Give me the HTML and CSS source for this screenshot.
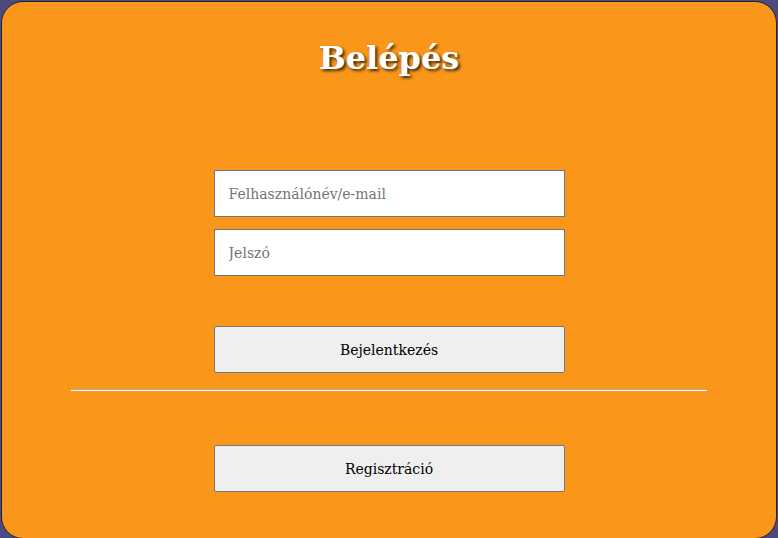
FILE: index.html
```html
<!DOCTYPE html>
<html lang="hu">
<head>
<meta charset="utf-8">
<title>Belépés</title>
<link rel="stylesheet" href="styles.css">
</head>
<body>
<div class="card">
  <h1 class="title">Belépés</h1>
  <form class="form">
    <input class="field" type="text" placeholder="Felhasználónév/e-mail">
    <input class="field" type="password" placeholder="Jelszó">
    <button class="btn btn-login" type="button">Bejelentkezés</button>
  </form>
  <div class="divider"></div>
  <div class="form">
    <button class="btn btn-reg" type="button">Regisztráció</button>
  </div>
</div>
</body>
</html>
```
FILE: styles.css
```css
html, body {
  margin: 0;
  padding: 0;
  height: 100%;
}
body {
  background: #4b4a82;
  font-family: "DejaVu Serif", Georgia, serif;
}
.card {
  box-sizing: border-box;
  margin: 1px;
  height: 538px;
  background: #fa9619;
  border: 1px solid #222233;
  border-radius: 22px;
  display: flex;
  flex-direction: column;
  align-items: center;
}
.title {
  margin: 36px 0 0;
  height: 40px;
  line-height: 40px;
  font-size: 32px;
  font-weight: bold;
  color: #ffffff;
  text-shadow: 2px 2px 3px #3a2a10;
}
.form {
  width: 351px;
  display: flex;
  flex-direction: column;
}
.form:first-of-type {
  margin-top: 92px;
}
.field {
  box-sizing: border-box;
  height: 47px;
  margin: 0 0 12px;
  padding: 0 14px;
  border: 1px solid #767676;
  background: #fff;
  font-family: "DejaVu Serif", Georgia, serif;
  font-size: 14px;
  color: #222;
}
.field::placeholder {
  color: #757575;
}
.btn {
  box-sizing: border-box;
  height: 47px;
  border: 1px solid #767676;
  border-radius: 2px;
  background: #efefef;
  font-family: "DejaVu Serif", Georgia, serif;
  font-size: 14px;
  color: #000;
}
.btn-login {
  margin-top: 38px;
}
.divider {
  width: 636px;
  height: 0;
  margin: 16px 0 54px;
  border-top: 1px solid #a9a9a9;
  border-bottom: 1px solid #ffffff;
}
```
